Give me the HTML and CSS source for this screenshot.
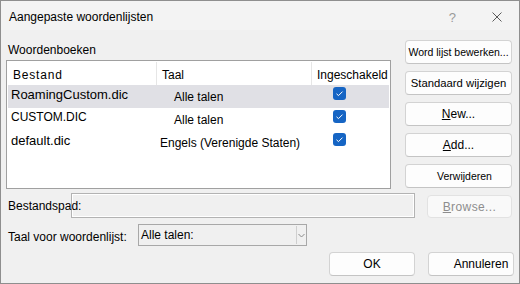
FILE: index.html
```html
<!DOCTYPE html>
<html lang="nl">
<head>
<meta charset="UTF-8">
<title>Aangepaste woordenlijsten</title>
<link rel="stylesheet" href="styles.css">
</head>
<body>
<div class="dlg">
  <div class="titlebar">
    <h1>Aangepaste woordenlijsten</h1>
    <span class="help">?</span>
    <svg class="close" width="10" height="10" viewBox="0 0 10 10"><path d="M0.5 0.5L9.5 9.5M9.5 0.5L0.5 9.5" stroke="#5a5a5a" stroke-width="1" fill="none"/></svg>
  </div>

  <div class="main">
    <div class="top">
      <div class="left">
        <div class="label">Woordenboeken</div>
        <div class="listbox">
          <div class="lrow head">
            <div class="c1">Bestand</div>
            <div class="c2">Taal</div>
            <div class="c3">Ingeschakeld</div>
          </div>
          <div class="lrow sel">
            <div class="c1">RoamingCustom.dic</div>
            <div class="c2 ind">Alle talen</div>
            <div class="c3"><span class="cb"></span></div>
          </div>
          <div class="lrow">
            <div class="c1 caps">CUSTOM.DIC</div>
            <div class="c2 ind">Alle talen</div>
            <div class="c3"><span class="cb"></span></div>
          </div>
          <div class="lrow">
            <div class="c1">default.dic</div>
            <div class="c2">Engels (Verenigde Staten)</div>
            <div class="c3"><span class="cb"></span></div>
          </div>
        </div>
      </div>
      <div class="right">
        <button class="btn small">Word lijst bewerken...</button>
        <button class="btn mid">Standaard wijzigen</button>
        <button class="btn"><u>N</u>ew...</button>
        <button class="btn"><u>A</u>dd...</button>
        <button class="btn small shift">Verwijderen</button>
      </div>
    </div>

    <div class="row-path">
      <span class="flabel path">Bestandspad:</span>
      <div class="input"></div>
      <button class="btn browse" disabled><u>B</u>rowse...</button>
    </div>

    <div class="row-lang">
      <span class="flabel lang">Taal voor woordenlijst:</span>
      <div class="select">
        <span class="val">Alle talen:</span>
        <span class="arrow"><svg width="7" height="5" viewBox="0 0 7 5"><path d="M0.5 1L3.5 4L6.5 1" stroke="#8a8a8a" fill="none"/></svg></span>
      </div>
    </div>

    <div class="row-btns">
      <button class="btn ok">OK</button>
      <button class="btn cancel">Annuleren</button>
    </div>
  </div>
</div>
</body>
</html>
```

FILE: styles.css
```css
*{box-sizing:border-box;margin:0;padding:0}
body{width:520px;height:284px;background:#f0f0f0;font-family:"Liberation Sans",Arial,sans-serif;font-size:12px;color:#000}

.dlg{width:520px;height:284px;border:1px solid #8e8e8e;background:#f0f0f0;display:flex;flex-direction:column}

/* title bar */
.titlebar{height:29px;background:#f3f3f3;display:flex;align-items:center;padding:3px 0 0 8px}
.titlebar h1{flex:1;font-size:12px;font-weight:normal}
.help{color:#9a9a9a;font-size:13px;margin-right:36px}
.close{margin-right:17px}

.main{padding:0 5px}

/* top part */
.top{display:flex;margin-top:10px}
.left{width:385px}
.label{height:20px;line-height:20px;padding-left:2px}
.listbox{height:129px;background:#fff;border:1px solid #a0a0a0;padding:1px}
.lrow{display:flex;height:23px}
.lrow .c1{width:149px;padding-left:3px;font-size:13px;line-height:19px}
.lrow .c2{width:155px;padding:3px 0 0 3px;line-height:19px}
.lrow .c3{flex:1;padding:2px 0 0 21px}
.lrow .ind{padding-left:17px}
.lrow .caps{font-size:12px}
.lrow.sel{background:#e0e0e5}

.head{align-items:flex-end}
.head .c1,.head .c2,.head .c3{height:23px;font-size:12px;line-height:14px;padding:0 0 3px 5px;display:flex;align-items:flex-end}
.head .c1{border-right:1px solid #e6e6e6;letter-spacing:.8px}
.head .c2{border-right:1px solid #e6e6e6}

.cb{display:block;width:13px;height:13px;border-radius:3px;background:#1665c4 url("data:image/svg+xml;utf8,<svg xmlns='http://www.w3.org/2000/svg' width='13' height='13'><path d='M3.5 6.8L5.5 8.6L9.5 4.6' stroke='white' stroke-width='1' fill='none'/></svg>") no-repeat}

/* buttons */
.right{width:107px;margin-left:14px;display:flex;flex-direction:column;gap:7px}
.btn{height:24px;border:1px solid #d3d3d3;border-bottom-color:#c4c4c4;border-radius:4px;background:#fdfdfd;font-family:inherit;font-size:12px;color:#000;text-align:center;padding:0}
.btn.small{font-size:10.5px}
.btn.mid{font-size:11.3px}
.btn.shift{padding-left:12px}
.btn u{text-decoration:underline}

/* path row */
.row-path{display:flex;align-items:center;margin-top:4px;height:25px}
.flabel{padding-left:2px;white-space:nowrap;position:relative;z-index:1}
.flabel.path{width:65px}
.input{width:344px;height:25px;border:1px solid #b3b3b3;box-shadow:inset 0 0 0 1px #fff;background:#f0f0f0}
.browse{width:85px;height:23px;margin-left:12px;align-self:flex-end;color:#8d8d8d;border-color:#e2e2e2;background:#f9f9f9;letter-spacing:.4px}

/* language row */
.row-lang{display:flex;align-items:center;margin-top:6px}
.flabel.lang{width:132px;padding-top:4px}
.select{width:169px;height:22px;border:1px solid #a8a8a8;background:#f0f0f0;display:flex;align-items:center}
.select .val{flex:1;padding-left:2px}
.select .arrow{width:10px;height:18px;border-left:1px solid #cfcfcf;display:flex;align-items:center;justify-content:center}

/* ok / cancel */
.row-btns{display:flex;justify-content:flex-end;gap:13px;margin-top:6px}
.ok,.cancel{width:86px}
.cancel{padding-left:20px}
```
